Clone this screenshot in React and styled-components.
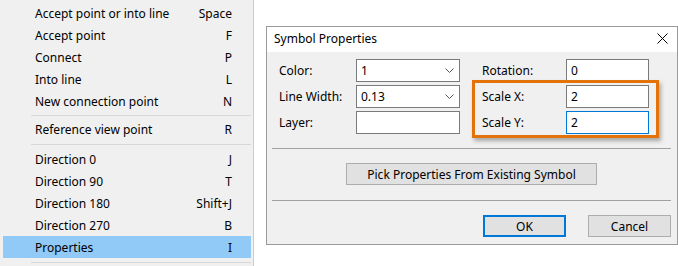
import React from "react";
import styled, { createGlobalStyle } from "styled-components";

const GlobalStyle = createGlobalStyle`
  html, body { margin: 0; padding: 0; background: #ffffff; }
  body { font-family: "Noto Sans", "Liberation Sans", sans-serif; font-size: 12px; color: #000; }
  * { box-sizing: border-box; }
`;

const Page = styled.div`
  display: flex;
  align-items: flex-start;
  width: 678px;
  height: 266px;
  overflow: hidden;
`;

const Menu = styled.div`
  width: 254px;
  height: 266px;
  flex: none;
  background: #f0f0f0;
  border-right: 1px solid #cccccc;
  padding: 3px 2px 0 3px;
  display: flex;
  flex-direction: column;
`;

const MenuRow = styled.div`
  height: 22px;
  display: flex;
  align-items: center;
  justify-content: space-between;
  padding: 0 19px 0 32px;
  background: ${(p) => (p.$active ? "#91c9f7" : "transparent")};
  white-space: nowrap;
`;

const MenuSep = styled.div`
  height: ${(p) => p.$h || 7}px;
  display: flex;
  align-items: center;
  padding-left: 28px;
  &::after {
    content: "";
    flex: 1;
    height: 1px;
    background: #d7d7d7;
  }
`;

const DialogArea = styled.div`
  padding: 26px 0 0 12px;
`;

const Dialog = styled.div`
  width: 412px;
  height: 219px;
  border: 1px solid #9a9a9a;
  background: #f0f0f0;
  display: flex;
  flex-direction: column;
`;

const TitleBar = styled.div`
  height: 25px;
  background: #ffffff;
  display: flex;
  align-items: center;
  justify-content: space-between;
  padding: 0 9px 3px 7px;
`;

const Body = styled.div`
  padding: 7px 6px 0 5px;
  display: flex;
  flex-direction: column;
`;

const Form = styled.div`
  position: relative;
  display: grid;
  grid-template-columns: 77px 104px 106px 83px;
  grid-auto-rows: 23px;
  row-gap: 3px;
  padding-left: 7px;
`;

const Label = styled.div`
  display: flex;
  align-items: center;
  padding-left: ${(p) => (p.$indent ? 22 : 0)}px;
`;

const Field = styled.div`
  height: 23px;
  background: #ffffff;
  border: 1px solid ${(p) => (p.$focus ? "#0078d7" : "#7a7a7a")};
  display: flex;
  align-items: center;
  justify-content: space-between;
  padding: 0 5px 0 4px;
`;

const Chevron = () => (
  <svg width="9" height="5" viewBox="0 0 9 5">
    <path d="M0.5 0.5 L4.5 4.5 L8.5 0.5" fill="none" stroke="#555" strokeWidth="1" />
  </svg>
);

const Highlight = styled.div`
  position: absolute;
  left: 200px;
  top: 21px;
  width: 187px;
  height: 58px;
  border: 3px solid #e37208;
  box-shadow: 2px 3px 4px rgba(0, 0, 0, 0.3);
  pointer-events: none;
`;

const Separator = styled.div`
  height: 1px;
  background: #a0a0a0;
  margin-top: ${(p) => p.$mt}px;
`;

const CenterRow = styled.div`
  display: flex;
  justify-content: center;
  margin-top: 14px;
`;

const Button = styled.div`
  height: 22px;
  width: ${(p) => p.$w}px;
  background: #e1e1e1;
  border: ${(p) => (p.$default ? "2px solid #0078d7" : "1px solid #adadad")};
  display: flex;
  align-items: center;
  justify-content: center;
`;

const ButtonRow = styled.div`
  display: flex;
  justify-content: flex-end;
  gap: 22px;
  margin-top: 14px;
`;

const Close = () => (
  <svg width="11" height="11" viewBox="0 0 11 11">
    <path d="M0.5 0.5 L10.5 10.5 M10.5 0.5 L0.5 10.5" stroke="#000" strokeWidth="1" />
  </svg>
);

const menuItems = [
  ["Accept point or into line", "Space"],
  ["Accept point", "F"],
  ["Connect", "P"],
  ["Into line", "L"],
  ["New connection point", "N"],
  "sep",
  ["Reference view point", "R"],
  "sep",
  ["Direction 0", "J"],
  ["Direction 90", "T"],
  ["Direction 180", "Shift+J"],
  ["Direction 270", "B"],
  ["Properties", "I", true],
  "sep",
];

export default function App() {
  return (
    <>
      <GlobalStyle />
      <Page>
        <Menu>
          {menuItems.map((it, i) =>
            it === "sep" ? (
              <MenuSep key={i} $h={i === 5 ? 6 : 8} />
            ) : (
              <MenuRow key={i} $active={it[2]}>
                <span>{it[0]}</span>
                <span>{it[1]}</span>
              </MenuRow>
            )
          )}
        </Menu>
        <DialogArea>
          <Dialog>
            <TitleBar>
              <span>Symbol Properties</span>
              <Close />
            </TitleBar>
            <Body>
              <Form>
                <Label>Color:</Label>
                <Field>1<Chevron /></Field>
                <Label $indent>Rotation:</Label>
                <Field>0</Field>
                <Label>Line Width:</Label>
                <Field>0.13<Chevron /></Field>
                <Label $indent>Scale X:</Label>
                <Field>2</Field>
                <Label>Layer:</Label>
                <Field />
                <Label $indent>Scale Y:</Label>
                <Field $focus>2</Field>
                <Highlight />
              </Form>
              <Separator $mt={14} />
              <CenterRow>
                <Button $w={251}>Pick Properties From Existing Symbol</Button>
              </CenterRow>
              <Separator $mt={15} />
              <ButtonRow>
                <Button $w={83} $default>OK</Button>
                <Button $w={83}>Cancel</Button>
              </ButtonRow>
            </Body>
          </Dialog>
        </DialogArea>
      </Page>
    </>
  );
}
